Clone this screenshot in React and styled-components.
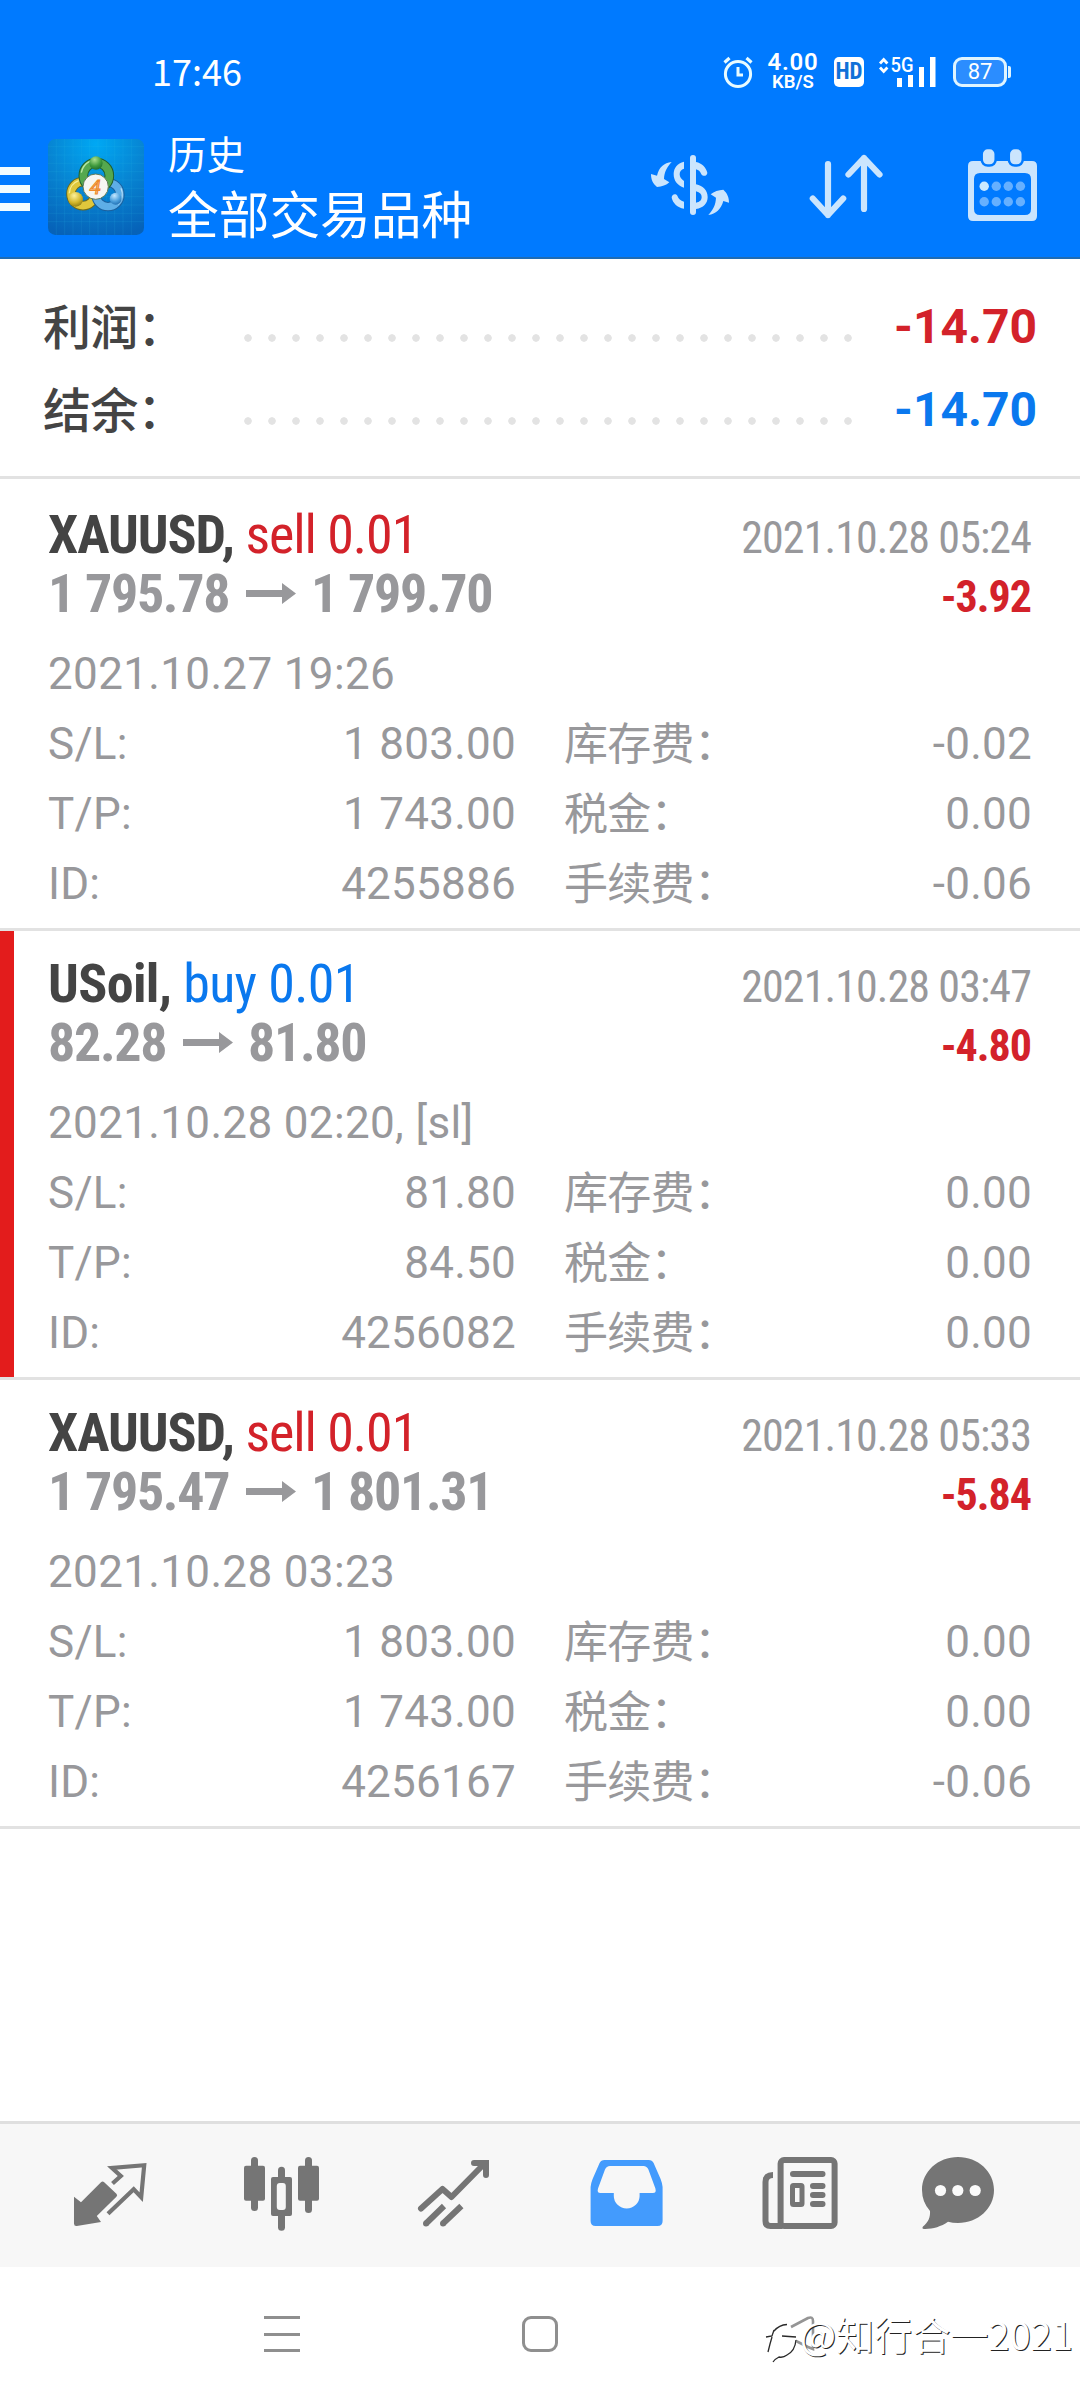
import React from 'react';
import styled, { createGlobalStyle } from 'styled-components';

const LATIN = 'Roboto, "Noto Sans CJK SC", sans-serif';
const CJK = '"Noto Sans CJK SC", sans-serif';
const CONDENSED = '"Roboto Condensed", Roboto, "Noto Sans CJK SC", sans-serif';

const RED = '#d3222a';
const BLUE = '#0a78ee';
const GRAY = '#98989b';

const GlobalStyle = createGlobalStyle`
  * { box-sizing: border-box; }
  body { margin: 0; background: #fff; }
`;

const Screen = styled.div`
  width: 1080px;
  height: 2400px;
  display: flex;
  flex-direction: column;
  background: #fff;
  font-family: ${LATIN};
  overflow: hidden;
`;

const Header = styled.header`
  height: 259px;
  background: #007aff;
  border-bottom: 2px solid #1f6cb4;
  color: #fff;
  display: flex;
  flex-direction: column;
`;

const StatusBar = styled.div`
  height: 118px;
  flex: none;
  padding: 26px 69px 0 152px;
  display: flex;
  align-items: center;
`;

const Clock = styled.div`
  flex: 1;
  padding-bottom: 5px;
  font: 400 36px/40px ${CJK};
`;

const StatusIcon = styled.svg`
  display: block;
  flex: none;
  overflow: visible;
  margin-right: ${(p) => p.$gap || 0}px;
`;

const NetSpeed = styled.div`
  width: 54px;
  margin-right: 14px;
  display: flex;
  flex-direction: column;
  align-items: center;
  font-family: ${LATIN};
`;

const SpeedValue = styled.span`
  font-size: 24px;
  line-height: 21px;
  font-weight: 600;
  letter-spacing: 0.7px;
`;

const SpeedUnit = styled.span`
  font-size: 18.5px;
  line-height: 19px;
  font-weight: 600;
`;

const HdBadge = styled.div`
  width: 30px;
  height: 30px;
  margin-right: 15px;
  border-radius: 5px;
  background: #fff;
  color: #1071d8;
  font: 700 23px/30px ${CONDENSED};
  font-stretch: 75%;
  display: flex;
  justify-content: center;
`;

const Battery = styled.div`
  width: 54px;
  height: 30px;
  border: 3px solid #dff4ff;
  border-radius: 9px;
  background: #2b8dff;
  font: 400 22px/24px ${LATIN};
  text-align: center;
`;

const BatteryTip = styled.div`
  width: 3px;
  height: 12px;
  margin-left: 1px;
  border-radius: 0 2px 2px 0;
  background: #dff4ff;
`;

const TitleBar = styled.div`
  flex: 1;
  display: flex;
  align-items: flex-start;
`;

const MenuButton = styled.div`
  width: 30px;
  height: 44px;
  margin: 49px 18px 0 0;
  display: flex;
  flex-direction: column;
  justify-content: space-between;
`;

const MenuLine = styled.span`
  height: 8px;
  background: #f2fcff;
`;

const AppLogo = styled.svg`
  display: block;
  width: 96px;
  height: 96px;
  margin: 21px 24px 0 0;
`;

const Titles = styled.div`
  flex: 1;
  padding-top: 9px;
  font-family: ${CJK};
`;

const Caption = styled.div`
  font-size: 38.5px;
  line-height: 50px;
`;

const Heading = styled.div`
  margin-top: 2px;
  font-size: 50.7px;
  line-height: 66px;
`;

const Actions = styled.div`
  display: flex;
  gap: 70px;
  padding-right: 33px;
`;

const ActionIcon = styled.svg`
  display: block;
  height: 139px;
`;

const Summary = styled.section`
  height: 220px;
  padding: 26px 43px 0 43px;
  border-bottom: 3px solid #e2e2e2;
`;

const SummaryRow = styled.div`
  height: 83px;
  display: flex;
  align-items: center;
`;

const SummaryLabel = styled.div`
  width: 193px;
  padding-bottom: 6px;
  font: 500 48px/60px ${CJK};
  letter-spacing: -0.8px;
  color: #444;
`;

const DotLeader = styled.div`
  width: 624px;
  height: 8px;
  margin-top: 23px;
  background: radial-gradient(circle at center, #e3e3e3 0 3.4px, transparent 4.1px) 0 0 / 24px 8px repeat-x;
`;

const SummaryValue = styled.div`
  flex: 1;
  text-align: right;
  font-size: 48px;
  font-weight: 700;
  line-height: 60px;
  color: ${(p) => p.$color};
`;

const Deals = styled.main`
  flex: 1;
  padding-top: 3px;
`;

const Deal = styled.article`
  height: 449px;
  padding: 23px 48px 0 48px;
  border-bottom: 3px solid #e2e2e2;
  box-shadow: ${(p) => (p.$marked ? 'inset 14px 0 0 #e31c1c' : 'none')};
`;

const DealLine = styled.div`
  height: 59px;
  display: flex;
  align-items: baseline;
  justify-content: space-between;
  font-family: ${CONDENSED};
  font-stretch: 75%;
  font-size: 54px;
  line-height: 59px;
  white-space: pre;
`;

const DealTitle = styled.span`
  letter-spacing: ${(p) => p.$tracking}px;
`;

const Symbol = styled.b`
  font-weight: 700;
  color: #444;
`;

const Side = styled.span`
  color: ${(p) => p.$color};
`;

const Prices = styled.span`
  display: flex;
  align-items: baseline;
  font-weight: 700;
  letter-spacing: -1.35px;
  color: ${GRAY};
`;

const PriceArrow = styled.svg`
  width: 50px;
  height: 21px;
  margin: 0 15px 0 17px;
  align-self: center;
`;

const CloseTime = styled.span`
  margin-right: 1px;
  font-size: 44px;
  letter-spacing: -0.9px;
  color: ${GRAY};
`;

const Profit = styled.b`
  margin-right: 1px;
  font-size: 44px;
  font-weight: 700;
  letter-spacing: -1px;
  color: ${RED};
`;

const Details = styled.div`
  margin-top: 16px;
  display: grid;
  grid-template-columns: 468px 1fr;
  grid-auto-rows: 70px;
  column-gap: 48px;
  font-size: 44px;
  line-height: 70px;
  letter-spacing: 0.25px;
  color: ${GRAY};
`;

const OpenTime = styled.div`
  grid-column: 1 / -1;
  letter-spacing: 0.35px;
`;

const Field = styled.div`
  display: flex;
  justify-content: space-between;
`;

const CostLabel = styled.span`
  padding-top: 1px;
  letter-spacing: -0.7px;
`;

const TabBar = styled.nav`
  height: 146px;
  padding: 0 18px 0 24px;
  display: flex;
  background: #f7f7f7;
  border-top: 3px solid #dfdfdf;
`;

const TabIcon = styled.svg`
  display: block;
  width: 173px;
  height: 143px;
  color: ${(p) => (p.$active ? '#439bfd' : '#757575')};
`;

const SystemBar = styled.footer`
  height: 133px;
  display: flex;
  align-items: flex-start;
  padding: 49px 0 0 264px;
`;

const RecentsKey = styled.div`
  width: 36px;
  height: 36px;
  border-top: 3px solid #8f8f8f;
  border-bottom: 3px solid #8f8f8f;
  background: linear-gradient(#8f8f8f, #8f8f8f) 0 13.5px / 36px 3px no-repeat;
`;

const HomeKey = styled.div`
  width: 36px;
  height: 36px;
  margin: 0 207px 0 222px;
  border: 3px solid #8f8f8f;
  border-radius: 9px;
`;

const Watermark = styled.div`
  display: flex;
  align-items: flex-start;
`;

const WatermarkMark = styled.svg`
  display: block;
  width: 70px;
  height: 60px;
  flex: none;
`;

const WatermarkText = styled.span`
  margin: -12px 0 0 -35px;
  font: 400 38.1px/60px ${CJK};
  color: #fff;
  white-space: nowrap;
  text-shadow: 1px 1px 0 #222;
`;

const SUMMARY = [
  { label: '利润：', value: '-14.70', color: RED },
  { label: '结余：', value: '-14.70', color: BLUE },
];

const DEALS = [
  {
    symbol: 'XAUUSD', side: 'sell', volume: '0.01', open: '1 795.78', close: '1 799.70',
    closeTime: '2021.10.28 05:24', profit: '-3.92', openTime: '2021.10.27 19:26',
    sl: '1 803.00', tp: '1 743.00', id: '4255886', swap: '-0.02', tax: '0.00', fee: '-0.06',
  },
  {
    symbol: 'USoil', side: 'buy', volume: '0.01', open: '82.28', close: '81.80',
    closeTime: '2021.10.28 03:47', profit: '-4.80', openTime: '2021.10.28 02:20, [sl]',
    sl: '81.80', tp: '84.50', id: '4256082', swap: '0.00', tax: '0.00', fee: '0.00', marked: true,
  },
  {
    symbol: 'XAUUSD', side: 'sell', volume: '0.01', open: '1 795.47', close: '1 801.31',
    closeTime: '2021.10.28 05:33', profit: '-5.84', openTime: '2021.10.28 03:23',
    sl: '1 803.00', tp: '1 743.00', id: '4256167', swap: '0.00', tax: '0.00', fee: '-0.06',
  },
];

function Logo() {
  return (
    <AppLogo viewBox="55 57 288 288">
      <defs>
        <radialGradient id="sky" cx="0.5" cy="0.05" r="1">
          <stop offset="0" stopColor="#00a8f4" />
          <stop offset="0.5" stopColor="#0784d2" />
          <stop offset="1" stopColor="#0662b8" />
        </radialGradient>
        <radialGradient id="green" cx="0.4" cy="0.25" r="0.8">
          <stop offset="0" stopColor="#a9e08e" />
          <stop offset="0.6" stopColor="#3f9a3d" />
          <stop offset="1" stopColor="#1e6a2c" />
        </radialGradient>
        <radialGradient id="gold" cx="0.4" cy="0.25" r="0.8">
          <stop offset="0" stopColor="#fdf19a" />
          <stop offset="0.6" stopColor="#d2b62a" />
          <stop offset="1" stopColor="#8b7a14" />
        </radialGradient>
        <radialGradient id="azure" cx="0.4" cy="0.25" r="0.8">
          <stop offset="0" stopColor="#c4e8ff" />
          <stop offset="0.6" stopColor="#4b9fdc" />
          <stop offset="1" stopColor="#1f6cb0" />
        </radialGradient>
      </defs>
      <rect x="55" y="57" width="288" height="288" rx="22" fill="url(#sky)" />
      <path
        d="M80 57v288M105 57v288M130 57v288M155 57v288M180 57v288M205 57v288M230 57v288M255 57v288M280 57v288M305 57v288M55 80h288M55 105h288M55 130h288M55 155h288M55 180h288M55 205h288M55 230h288M55 255h288M55 280h288M55 305h288"
        stroke="#38c4e8" strokeOpacity="0.2" strokeWidth="2"
      />
      <g fill="none">
        <circle cx="160" cy="221" r="36" stroke="#6d6a1c" strokeWidth="29" />
        <circle cx="160" cy="221" r="36" stroke="#dfc73c" strokeWidth="23" />
        <circle cx="235" cy="224" r="36" stroke="#1b5f9c" strokeWidth="28" />
        <circle cx="235" cy="224" r="36" stroke="#5eaee6" strokeWidth="22" />
        <circle cx="200" cy="167" r="39" stroke="#215f2c" strokeWidth="29" />
        <circle cx="200" cy="167" r="39" stroke="#55a84e" strokeWidth="23" />
        <path d="M155 158a47 47 0 0 1 25-34" stroke="#b8e6a4" strokeWidth="4" />
        <path d="M119 220a42 42 0 0 1 28-38" stroke="#f8ee94" strokeWidth="4" />
        <path d="M274 205a44 44 0 0 1-8 48" stroke="#b5dcf7" strokeWidth="4" />
      </g>
      <circle cx="199" cy="129" r="20" fill="url(#green)" />
      <circle cx="138" cy="238" r="22" fill="url(#gold)" />
      <circle cx="258" cy="236" r="18" fill="url(#azure)" />
      <circle cx="198" cy="200" r="38" fill="#f7f6f2" stroke="#5f7a58" strokeWidth="3" />
      <text x="197" y="222" textAnchor="middle" fontFamily="Roboto, sans-serif" fontSize="60" fontWeight="400" fontStyle="italic" fill="#fbd9a8" stroke="#ee8a2c" strokeWidth="3.5">4</text>
    </AppLogo>
  );
}

function TopBar() {
  return (
    <Header>
      <StatusBar>
        <Clock>17:46</Clock>
        <StatusIcon width="30" height="32" viewBox="0 0 30 32" $gap={13} fill="none" stroke="#e8fbff">
          <circle cx="15" cy="18" r="12.6" strokeWidth="3" />
          <path d="M15 11v8h5" strokeWidth="3" />
          <path d="M1.5 6.5l5-4.5M28.500 6.500l-5-4.500" strokeWidth="3.200" />
        </StatusIcon>
        <NetSpeed>
          <SpeedValue>4.00</SpeedValue>
          <SpeedUnit>KB/S</SpeedUnit>
        </NetSpeed>
        <HdBadge>HD</HdBadge>
        <StatusIcon width="57" height="30" viewBox="879 57 57 30" $gap={17}>
          <path d="M880 63.500l3.700-4 3.700 4M880 67.500l3.700 4 3.700-4" fill="none" stroke="#fff" strokeWidth="2.800" />
          <text x="890.500" y="72" fontFamily="Roboto, sans-serif" fontSize="21" fontWeight="500" textLength="23" lengthAdjust="spacingAndGlyphs" fill="#fff">5G</text>
          <path d="M897 78h5v9h-5zM908 75h5v12h-5zM919 67h5v20h-5zM930 57h5.500v30h-5.500z" fill="#fff" />
        </StatusIcon>
        <Battery>87</Battery>
        <BatteryTip />
      </StatusBar>
      <TitleBar>
        <MenuButton>
          <MenuLine />
          <MenuLine />
          <MenuLine />
        </MenuButton>
        <Logo />
        <Titles>
          <Caption>历史</Caption>
          <Heading>全部交易品种</Heading>
        </Titles>
        <Actions>
          <ActionIcon width="90" viewBox="645 118 90 139">
            <g transform="translate(640 140) scale(0.33333)" fill="#cbe5fd">
              <rect x="150" y="45" width="18" height="180" rx="9" />
              <path d="M132 65C112 69 101 84 101 102C101 122 112 136 132 143V123C124 118 119 112 119 103C119 94 124 88 132 86Z" />
              <path d="M168 66C186 70 198 82 202 98C202 108 190 111 184 103C180 94 176 90 168 88Z" />
              <path d="M168 133C190 138 203 152 203 171C203 190 190 204 168 207V188C180 186 185 180 185 171C185 163 180 157 168 154Z" />
              <path d="M132 206C112 202 99 190 95 173C95 162 107 159 112 167C116 177 121 182 132 185Z" />
              <path d="M95 66C72 68 57 82 51 107L33 102C33 118 38 130 51 141C66 140 79 136 88 127L72 117C73 96 80 82 95 66Z" />
              <path d="M205 225C228 222 243 208 250 183L267 188C267 172 262 160 250 149C236 150 222 154 212 163L228 173C227 194 220 209 205 225Z" />
            </g>
          </ActionIcon>
          <ActionIcon width="84" viewBox="805 118 84 139" fill="none" stroke="#cbe5fd" strokeWidth="6.200" strokeLinecap="round" strokeLinejoin="round">
            <path d="M828 164v51M812.800 198.500l15.200 16.500 15.200-16.500" />
            <path d="M864 209v-51M848.500 174.500l15.500-16.500 15.500 16.500" />
          </ActionIcon>
          <ActionIcon width="88" viewBox="959 118 88 139">
            <path fillRule="evenodd" fill="#cbe5fd" d="M973 161h59q5 0 5 5v50q0 5-5 5h-59q-5 0-5-5v-50q0-5 5-5zM980 173q-6 0-6 6v30q0 6 6 6h45q6 0 6-6v-30q0-6-6-6z" />
            <g fill="#cbe5fd" stroke="#007aff" strokeWidth="2.500">
              <rect x="981.700" y="148" width="14" height="17.600" rx="6" />
              <rect x="1008.800" y="148" width="14" height="17.600" rx="6" />
            </g>
            <circle cx="984.200" cy="186.300" r="4.700" fill="#cbeaff" />
            <g fill="#66b0ff">
              <circle cx="996.300" cy="186.300" r="4.700" />
              <circle cx="1008.300" cy="186.300" r="4.700" />
              <circle cx="1020.400" cy="186.300" r="4.700" />
              <circle cx="984.200" cy="201.700" r="4.700" />
              <circle cx="996.300" cy="201.700" r="4.700" />
              <circle cx="1008.300" cy="201.700" r="4.700" />
              <circle cx="1020.400" cy="201.700" r="4.700" />
            </g>
          </ActionIcon>
        </Actions>
      </TitleBar>
    </Header>
  );
}

function DealCard({ deal }) {
  return (
    <Deal $marked={deal.marked}>
      <DealLine>
        <DealTitle $tracking={deal.side === 'sell' ? -1.05 : -0.65}>
          <Symbol>{deal.symbol}, </Symbol>
          <Side $color={deal.side === 'sell' ? RED : BLUE}>{deal.side} {deal.volume}</Side>
        </DealTitle>
        <CloseTime>{deal.closeTime}</CloseTime>
      </DealLine>
      <DealLine>
        <Prices>
          {deal.open}
          <PriceArrow viewBox="0 0 50 21">
            <path d="M0 7h36V0l14 10.500-14 10.500v-7H0z" fill={GRAY} />
          </PriceArrow>
          {deal.close}
        </Prices>
        <Profit>{deal.profit}</Profit>
      </DealLine>
      <Details>
        <OpenTime>{deal.openTime}</OpenTime>
        <Field><span>S/L:</span><span>{deal.sl}</span></Field>
        <Field><CostLabel>库存费：</CostLabel><span>{deal.swap}</span></Field>
        <Field><span>T/P:</span><span>{deal.tp}</span></Field>
        <Field><CostLabel>税金：</CostLabel><span>{deal.tax}</span></Field>
        <Field><span>ID:</span><span>{deal.id}</span></Field>
        <Field><CostLabel>手续费：</CostLabel><span>{deal.fee}</span></Field>
      </Details>
    </Deal>
  );
}

function Tabs() {
  return (
    <TabBar>
      <TabIcon viewBox="24 2124 173 143">
        <path d="M74 2196.700l7 5.600 20-20q1.600-1.500 3.200 0l12.200 11.500q1.500 1.500 0 3l-19.600 19.200 4.200 6-24.200 4q-2.800.3-2.800-2.500z" fill="currentColor" />
        <path d="M112.500 2183.500l8.300-7.500-8.800-8 32.200-2.800-3 32-7.500-8-25.700 24.500" fill="none" stroke="currentColor" strokeWidth="4.200" />
      </TabIcon>
      <TabIcon viewBox="197 2124 173 143" fill="currentColor">
        <rect x="251" y="2157" width="7" height="54" rx="3.500" />
        <rect x="244" y="2165.700" width="21" height="35" rx="2" />
        <rect x="278" y="2166.700" width="7" height="64" rx="3.500" />
        <rect x="271" y="2177" width="21" height="39" rx="2" />
        <rect x="276.800" y="2183" width="9" height="27" rx="3" fill="#f7f7f7" />
        <rect x="305" y="2157" width="7" height="56" rx="3.500" />
        <rect x="298" y="2165.700" width="21" height="35" rx="2" />
      </TabIcon>
      <TabIcon viewBox="370 2124 173 143" fill="none" stroke="currentColor" strokeWidth="6">
        <path d="M421 2208.500l21.500-19.500 9 8 33-33.500" strokeLinejoin="round" strokeLinecap="round" />
        <path d="M474 2163h12v12" strokeLinecap="round" />
        <path d="M426 2223.500l18-17.500M443 2223.500l18.400-17.500" />
        <path d="M426 2223.500h.01M443 2223.500h.01" strokeLinecap="round" />
      </TabIcon>
      <TabIcon viewBox="543 2124 173 143" $active>
        <path fillRule="evenodd" fill="currentColor" d="M590.600 2221v-34q.4-4 2-8l7-16q1.400-3 5-3h44q3.600 0 5 3l7 16q1.600 4 2 8v34q0 5-5 5h-62q-5 0-5-5zM610 2166q-3.500 0-5 3.500l-7 19q-1.300 4.500 2.500 4.500h13.300v3a12.900 12.400 0 0 0 25.800 0v-3h13.300q3.800 0 2.500-4.500l-7-19q-1.500-3.500-5-3.500z" />
      </TabIcon>
      <TabIcon viewBox="716 2124 173 143" fill="none" stroke="currentColor" strokeWidth="6">
        <rect x="780.600" y="2160" width="54" height="66" rx="3.500" />
        <path d="M773 2175q-7.500 0-7.500 7v39q0 5 5 5h12" />
        <path d="M793 2174h29.500M813 2186h9.500M813 2195h9.500M813 2204h9.500" strokeLinecap="round" />
        <rect x="792.500" y="2185.500" width="9.500" height="19" rx="1" strokeWidth="5" />
      </TabIcon>
      <TabIcon viewBox="889 2124 173 143">
        <path fill="currentColor" d="M958 2157c20 0 36 14.500 36 33s-16 33-36 33q-5.500 0-10-1.200c-7 5-16 7.500-24 7.200q-2.500-.3-1-2.500c5-4 7.500-9 7-15.500q-8-9-8-21c0-18.500 16-33 36-33z" />
        <g fill="#fbfbfb">
          <circle cx="940.500" cy="2190.500" r="5.600" />
          <circle cx="957.800" cy="2190.500" r="5.600" />
          <circle cx="975.200" cy="2190.500" r="5.600" />
        </g>
      </TabIcon>
    </TabBar>
  );
}

function SystemKeys() {
  return (
    <SystemBar>
      <RecentsKey />
      <HomeKey />
      <Watermark>
        <WatermarkMark viewBox="765 2316 70 60" fill="none">
          <path d="M791 2327l17-9q5-2 5 3v28l-5-2-26-13" stroke="#959595" strokeWidth="2.600" />
          <path d="M767 2336q8 1 7-4q8-8 13-7l9 11q2 12-6 18t-15 4q-5 2-7 5l-1-12z" fill="#fff" />
          <path d="M766 2337l6-1 2-6M768 2352l2-8 2-7M774 2331q5-6 13-6.500M796 2340q-1 11-9 15-4 3-8 2-4 2-6 5M796 2337l-14-1" stroke="#2a2a2a" strokeWidth="1.300" />
        </WatermarkMark>
        <WatermarkText>@知行合一2021</WatermarkText>
      </Watermark>
    </SystemBar>
  );
}

export default function App() {
  return (
    <Screen>
      <GlobalStyle />
      <TopBar />
      <Summary>
        {SUMMARY.map((row) => (
          <SummaryRow key={row.label}>
            <SummaryLabel>{row.label}</SummaryLabel>
            <DotLeader />
            <SummaryValue $color={row.color}>{row.value}</SummaryValue>
          </SummaryRow>
        ))}
      </Summary>
      <Deals>
        {DEALS.map((deal) => (
          <DealCard key={deal.id} deal={deal} />
        ))}
      </Deals>
      <Tabs />
      <SystemKeys />
    </Screen>
  );
}
